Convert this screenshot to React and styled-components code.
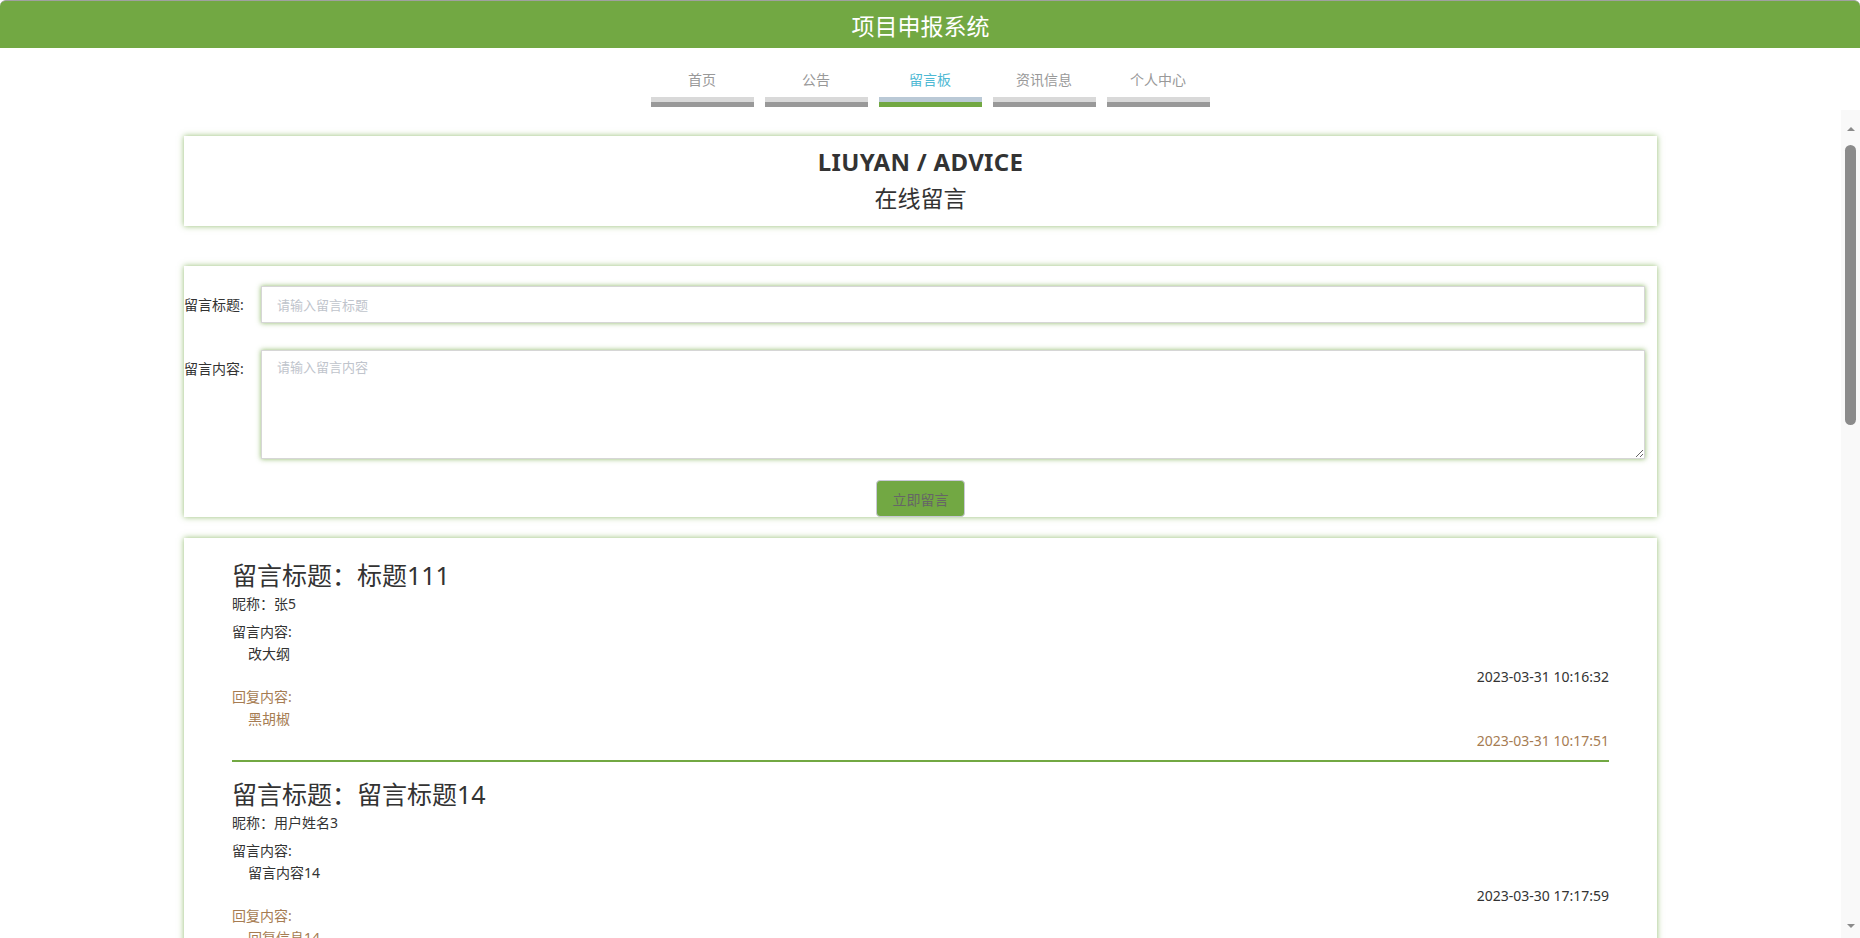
import React from "react";
import styled, { createGlobalStyle } from "styled-components";

const green = "#72a843";
const brown = "#a67c52";

const GlobalStyle = createGlobalStyle`
  html, body {
    margin: 0;
    height: 100%;
    overflow: hidden;
    background: #fff;
    font-family: "Noto Sans", "Noto Sans CJK SC", sans-serif;
  }
  #root {
    height: 100%;
  }
`;

const Page = styled.div`
  display: flex;
  flex-direction: column;
  height: 100vh;
`;

const Header = styled.header`
  flex: none;
  height: 48px;
  box-sizing: border-box;
  display: flex;
  align-items: center;
  justify-content: center;
  padding-right: 19px;
  background: ${green};
  border-top: 1px solid #a0a0a0;
  border-radius: 6px 6px 0 0;
  color: #fff;
  font-size: 23px;
`;

const Nav = styled.nav`
  flex: none;
  display: flex;
  justify-content: center;
  gap: 11px;
  padding: 22px 0 3px;
`;

const NavItem = styled.a`
  width: 103px;
  display: flex;
  flex-direction: column;
  align-items: center;
  gap: 7px;
  font-size: 14px;
  line-height: 20px;
  color: ${(p) => (p.$active ? "#4fb9d4" : "#999")};
  text-decoration: none;
  cursor: pointer;
`;

const NavBar = styled.span`
  align-self: stretch;
  height: 5px;
  background: ${(p) => (p.$active ? "#bac9d6" : "#d9d9d9")};
  border-bottom: 5px solid ${(p) => (p.$active ? green : "#999")};
`;

const Body = styled.div`
  flex: 1;
  min-height: 0;
  display: flex;
`;

const Scroll = styled.main`
  flex: 1;
  overflow-y: auto;
  scrollbar-width: none;
  padding: 26px 0 30px;
`;

/* drawn scroll rail, the page's own scrollbar is hidden in the capture */
const Rail = styled.div`
  flex: none;
  width: 19px;
  background: #f9f9f9;
  display: flex;
  flex-direction: column;
  align-items: center;
`;

const RailArrow = styled.span`
  width: 0;
  height: 0;
  border-left: 4px solid transparent;
  border-right: 4px solid transparent;
  ${(p) =>
    p.$down
      ? `border-top: 4px solid #8b8b8b; margin: auto 0 10px;`
      : `border-bottom: 4px solid #8b8b8b; margin-top: 17px;`}
`;

const RailThumb = styled.span`
  width: 11px;
  height: 280px;
  margin-top: 14px;
  border-radius: 6px;
  background: #8b8b8b;
`;

const Panel = styled.section`
  width: 1473px;
  margin: 0 auto;
  box-sizing: border-box;
  background: #fff;
  box-shadow: 0 0 6px rgba(114, 168, 67, 0.75);
`;

const TitlePanel = styled(Panel)`
  padding: 8px 0 10px;
  text-align: center;
  color: #333;
`;

const EnTitle = styled.div`
  font-size: 24px;
  font-weight: 700;
  letter-spacing: 0.3px;
  line-height: 36px;
`;

const CnTitle = styled.div`
  font-size: 23px;
  line-height: 36px;
`;

const FormPanel = styled(Panel)`
  margin-top: 40px;
  padding-top: 20px;
`;

const FormRow = styled.div`
  display: flex;
  align-items: flex-start;
  padding-right: 12px;
  margin-bottom: ${(p) => p.$gap}px;
`;

const Label = styled.label`
  flex: none;
  width: 77px;
  font-size: 14px;
  line-height: ${(p) => p.$lh}px;
  color: #333;
`;

const fieldStyle = `
  flex: 1;
  box-sizing: border-box;
  border: 1px solid #d6d6d6;
  box-shadow: 0 0 5px rgba(114, 168, 67, 0.8);
  font-family: "Noto Sans", "Noto Sans CJK SC", sans-serif;
  font-size: 13px;
  color: #333;
  outline: none;
  background: #fff;
  &::placeholder {
    color: #c0c4cc;
  }
`;

const Input = styled.input`
  ${fieldStyle}
  height: 37px;
  padding: 0 15px;
`;

const TextArea = styled.textarea`
  ${fieldStyle}
  height: 109px;
  padding: 6px 15px;
  line-height: 20px;
`;

const SubmitButton = styled.button`
  display: block;
  margin: 0 auto;
  width: 89px;
  height: 37px;
  background: ${green};
  color: #666;
  border: 1px solid #c9c9d6;
  border-radius: 4px;
  font-family: "Noto Sans", "Noto Sans CJK SC", sans-serif;
  font-size: 14px;
  cursor: pointer;
`;

const ListPanel = styled(Panel)`
  margin-top: 21px;
  padding: 5px 48px 20px;
`;

const Item = styled.article`
  padding-top: 14px;
`;

const ItemTitle = styled.h3`
  margin: 0;
  font-size: 25px;
  font-weight: 400;
  line-height: 36px;
  color: #333;
`;

const Line = styled.div`
  font-size: 14px;
  line-height: ${(p) => p.$lh || 22}px;
  margin-top: ${(p) => p.$mt || 0}px;
  padding-left: ${(p) => (p.$indent ? 16 : 0)}px;
  text-align: ${(p) => (p.$right ? "right" : "left")};
  color: ${(p) => (p.$reply ? brown : "#333")};
`;

const Divider = styled.hr`
  margin: 8px 0 0;
  border: 0;
  border-top: 2px solid ${green};
`;

const navs = ["首页", "公告", "留言板", "资讯信息", "个人中心"];

const pad = (n) => String(n).padStart(2, "0");

const messages = [
  {
    title: "标题111",
    nick: "张5",
    content: "改大纲",
    time: "2023-03-31 10:16:32",
    reply: "黑胡椒",
    replyTime: "2023-03-31 10:17:51",
  },
  {
    title: "留言标题14",
    nick: "用户姓名3",
    content: "留言内容14",
    time: "2023-03-30 17:17:59",
    reply: "回复信息14",
    replyTime: "2023-03-30 17:17:59",
  },
  ...Array.from({ length: 8 }, (_, i) => {
    const n = 13 - i;
    const t = `2023-03-30 17:17:${pad(59 - (i + 1) * 4)}`;
    return {
      title: `留言标题${n}`,
      nick: `用户姓名${(n % 3) + 1}`,
      content: `留言内容${n}`,
      time: t,
      reply: `回复信息${n}`,
      replyTime: t,
    };
  }),
];

export default function App() {
  return (
    <Page>
      <GlobalStyle />
      <Header>项目申报系统</Header>
      <Nav>
        {navs.map((n) => (
          <NavItem key={n} $active={n === "留言板"}>
            {n}
            <NavBar $active={n === "留言板"} />
          </NavItem>
        ))}
      </Nav>
      <Body>
        <Scroll>
          <TitlePanel>
            <EnTitle>LIUYAN / ADVICE</EnTitle>
            <CnTitle>在线留言</CnTitle>
          </TitlePanel>

          <FormPanel>
            <FormRow $gap={27}>
              <Label $lh={37}>留言标题:</Label>
              <Input placeholder="请输入留言标题" />
            </FormRow>
            <FormRow $gap={21}>
              <Label $lh={38}>留言内容:</Label>
              <TextArea placeholder="请输入留言内容" />
            </FormRow>
            <SubmitButton>立即留言</SubmitButton>
          </FormPanel>

          <ListPanel>
            {messages.map((m, i) => (
              <Item key={i}>
                <ItemTitle>留言标题：{m.title}</ItemTitle>
                <Line>昵称：{m.nick}</Line>
                <Line $mt={6}>留言内容:</Line>
                <Line $indent>{m.content}</Line>
                <Line $right $lh={19} $mt={2}>
                  {m.time}
                </Line>
                <Line $reply>回复内容:</Line>
                <Line $reply $indent>
                  {m.reply}
                </Line>
                <Line $reply $right>
                  {m.replyTime}
                </Line>
                <Divider />
              </Item>
            ))}
          </ListPanel>
        </Scroll>
        <Rail>
          <RailArrow />
          <RailThumb />
          <RailArrow $down />
        </Rail>
      </Body>
    </Page>
  );
}
